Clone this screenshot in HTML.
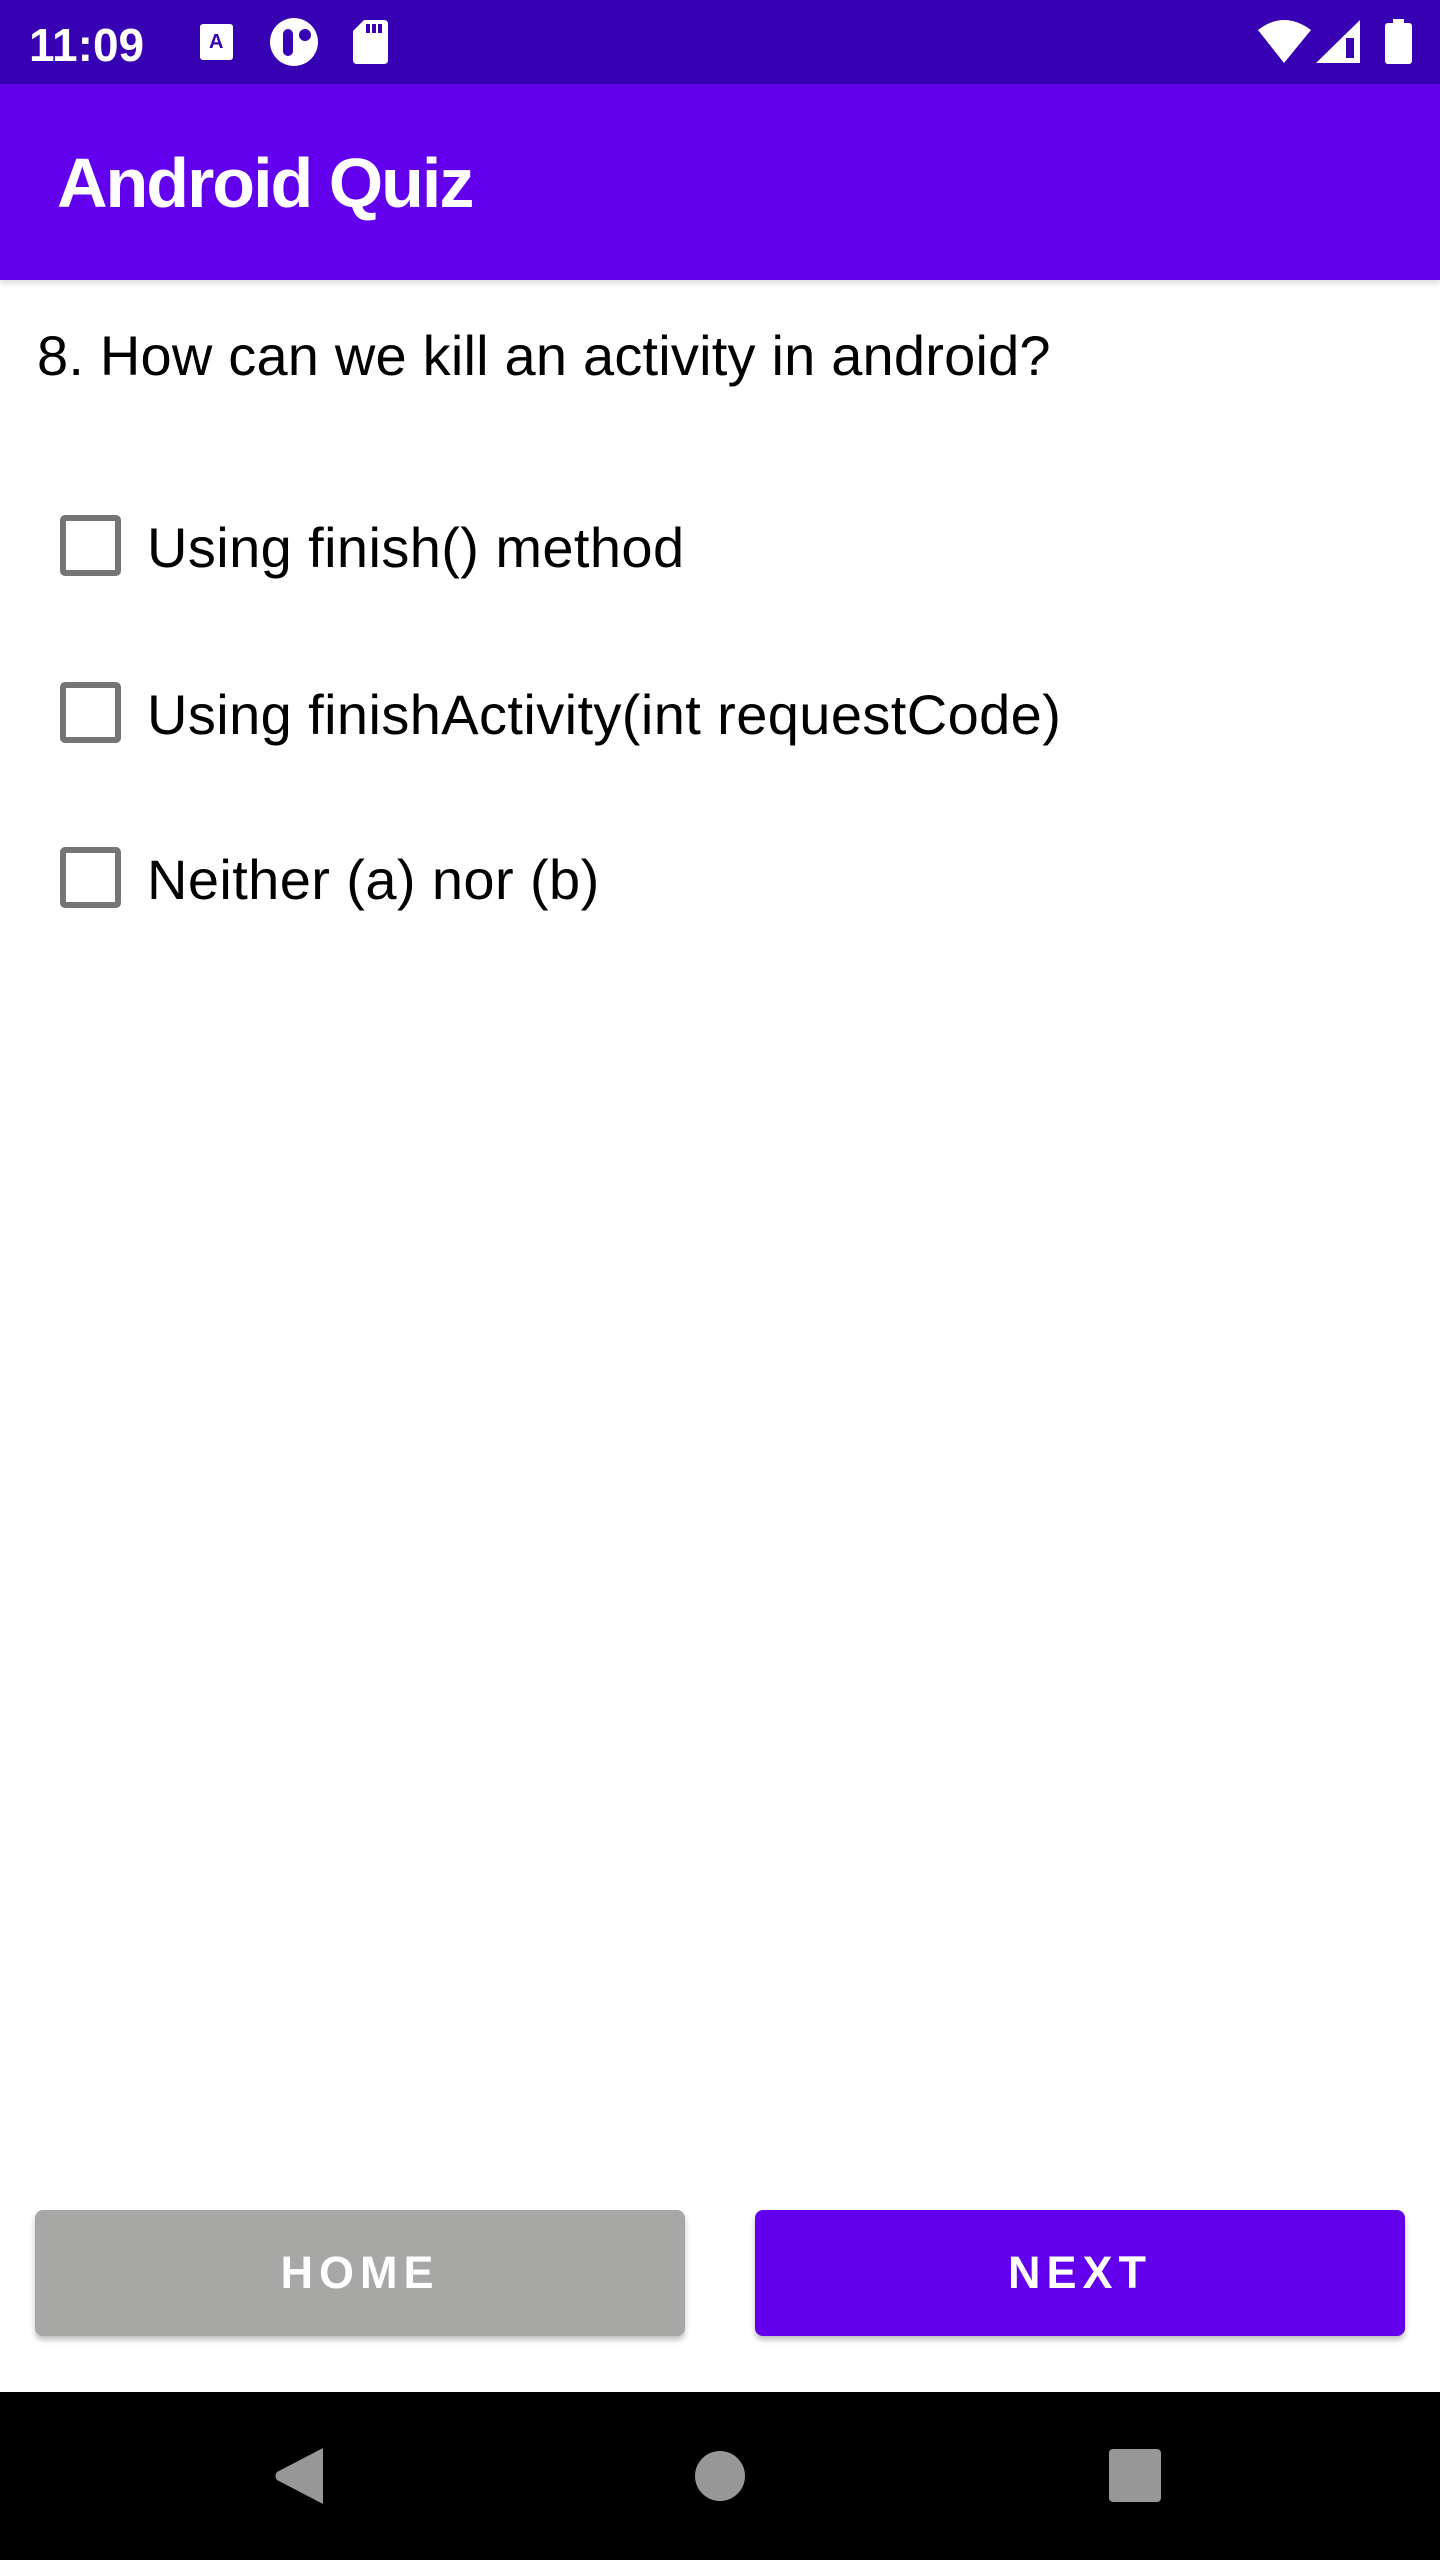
<!DOCTYPE html>
<html><head><meta charset="utf-8"><style>
*{margin:0;padding:0;box-sizing:border-box}
html,body{width:1440px;height:2560px;overflow:hidden;background:#fff;font-family:"Liberation Sans",Arial,sans-serif}
.a{position:absolute;line-height:1;white-space:nowrap}
.cb{position:absolute;left:60px;width:61px;height:61px;border:6px solid #757575;border-radius:5px}
.t{font-size:56px;color:#000;letter-spacing:0.4px}
.btn{position:absolute;top:2210px;height:126px;width:650px;border-radius:8px;display:flex;align-items:center;justify-content:center;color:#fff;font-size:45px;font-weight:bold;letter-spacing:6px;box-shadow:0 4px 6px rgba(0,0,0,.25)}
</style></head><body>
<div style="position:absolute;left:0;top:0;width:1440px;height:84px;background:#3700b3"></div>
<div class="a" style="left:29px;top:22px;font-size:46px;color:#fff;font-weight:bold">11:09</div>
<svg style="position:absolute;left:0;top:0" width="1440" height="84">
<rect x="200" y="24" width="33" height="36" rx="3" fill="#fff"/>
<text x="209" y="48" font-size="20" font-weight="bold" fill="#3700b3" font-family="Liberation Sans">A</text>
<circle cx="294" cy="42" r="24" fill="#fff"/>
<rect x="283" y="29" width="10" height="27" rx="5" fill="#3700b3"/>
<circle cx="305" cy="35" r="6" fill="#3700b3"/>
<path d="M364 20H384Q388 20 388 24V60Q388 64 384 64H357Q353 64 353 60V31Z" fill="#fff"/>
<rect x="366" y="24" width="4" height="9" fill="#3700b3"/><rect x="372" y="24" width="4" height="9" fill="#3700b3"/><rect x="378" y="24" width="4" height="9" fill="#3700b3"/>
<path d="M1258 30Q1284 10 1311 30L1284 63Z" fill="#fff"/>
<path d="M1316 63L1360 20V63Z" fill="#fff"/>
<rect x="1346" y="38" width="8" height="20" fill="#3700b3"/>
<rect x="1393" y="19" width="11" height="6" fill="#fff"/>
<rect x="1385" y="23" width="27" height="41" rx="3" fill="#fff"/>
</svg>
<div style="position:absolute;left:0;top:84px;width:1440px;height:196px;background:#6200ee;box-shadow:0 3px 6px rgba(0,0,0,.15)"></div>
<div class="a" style="left:57px;top:148px;font-size:70px;color:#fff;font-weight:bold;letter-spacing:-2px">Android Quiz</div>
<div class="a t" style="left:37px;top:328px;letter-spacing:0.2px">8. How can we kill an activity in android?</div>
<div class="cb" style="top:515px"></div>
<div class="a t" style="left:147px;top:520px">Using finish() method</div>
<div class="cb" style="top:682px"></div>
<div class="a t" style="left:147px;top:687px">Using finishActivity(int requestCode)</div>
<div class="cb" style="top:847px"></div>
<div class="a t" style="left:147px;top:852px">Neither (a) nor (b)</div>
<div class="btn" style="left:35px;background:#a7a8a6">HOME</div>
<div class="btn" style="left:755px;background:#6200ee">NEXT</div>
<div style="position:absolute;left:0;top:2392px;width:1440px;height:168px;background:#000"></div>
<svg style="position:absolute;left:0;top:2392px" width="1440" height="168">
<path d="M323 56V112L277 88Q274 84 277 80Z" fill="#979797"/>
<circle cx="720" cy="84" r="25" fill="#979797"/>
<rect x="1109" y="57" width="52" height="53" rx="4" fill="#979797"/>
</svg>
</body></html>
